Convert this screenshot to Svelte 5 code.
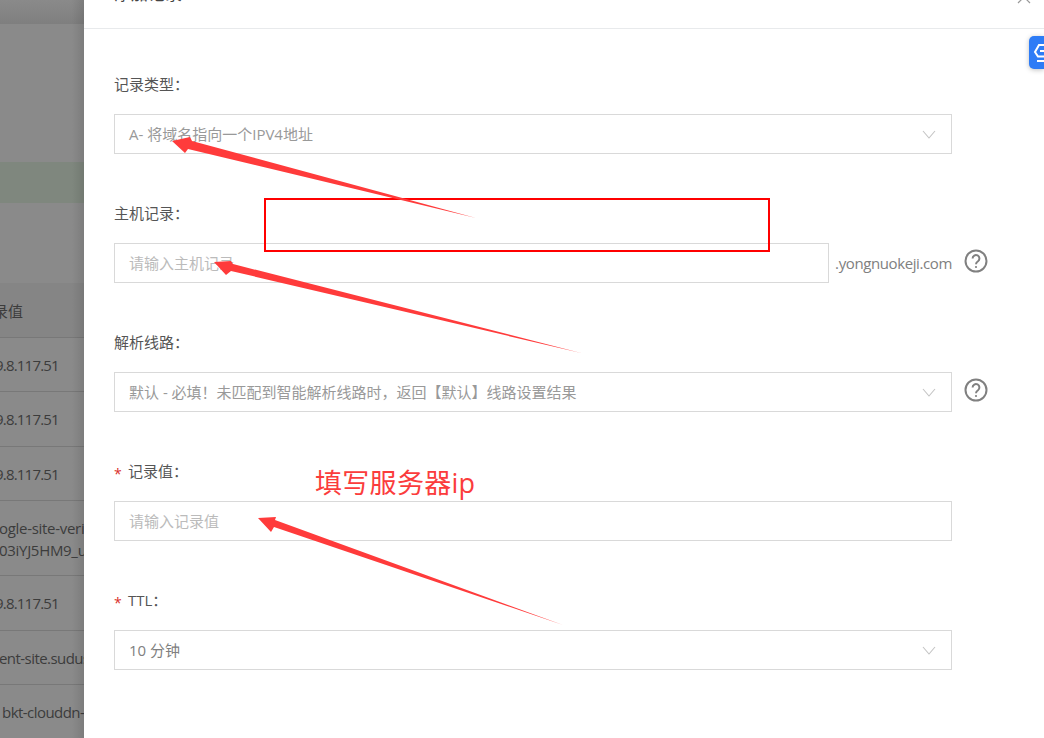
<script>
	const rows = [
		{ height: 54, lines: ['9.8.117.51'], offset: -5, spacing: -0.8 },
		{ height: 55, lines: ['9.8.117.51'], offset: -5, spacing: -0.8 },
		{ height: 54, lines: ['9.8.117.51'], offset: -5, spacing: -0.8 },
		{ height: 75, lines: ['ogle-site-verif', '03iYJ5HM9_u'], offset: -1, spacing: -0.3 },
		{ height: 55, lines: ['9.8.117.51'], offset: -5, spacing: -0.8 },
		{ height: 54, lines: ['ent-site.sudus'], offset: -1, spacing: -0.55 },
		{ height: 54, lines: ['bkt-clouddn-'], offset: 2, spacing: -0.55 }
	];

	const fields = [
		{ label: '记录类型：', value: 'A- 将域名指向一个IPV4地址', tone: 'muted', select: true },
		{ label: '主机记录：', value: '请输入主机记录', tone: 'hint', suffix: '.yongnuokeji.com', help: true },
		{
			label: '解析线路：',
			value: '默认 - 必填！未匹配到智能解析线路时，返回【默认】线路设置结果',
			tone: 'muted',
			select: true,
			help: true
		},
		{ label: '记录值：', value: '请输入记录值', tone: 'hint', required: true },
		{ label: 'TTL：', value: '10 分钟', tone: 'plain', select: true, required: true }
	];

	const arrows = [
		'172,141 190,137 192,141 476,218 188,149 185,153',
		'214,262 231,261 233,264 581,353 231,271 226,275',
		'258,518 276,517 275,520 563,625 274,527 271,532'
	];
</script>

<div class="page">
	<aside class="backdrop">
		<div class="strip"></div>
		<div class="band"></div>
		<div class="band green"></div>
		<div class="band low"></div>
		<div class="table">
			<div class="thead"><span>录值</span></div>
			{#each rows as row}
				<div class="row" style="height: {row.height}px; letter-spacing: {row.spacing}px">
					<div style="margin-left: {row.offset}px">
						{#each row.lines as line}
							<div>{line}</div>
						{/each}
					</div>
				</div>
			{/each}
		</div>
	</aside>

	<main class="drawer">
		<header class="head">
			<span class="title">添加记录</span>
			<svg class="close" width="14" height="14" viewBox="0 0 14 14">
				<path d="M1 1l12 12M13 1L1 13" />
			</svg>
		</header>

		<form class="form">
			{#each fields as field}
				<div class="item">
					<div class="label">
						{#if field.required}<span class="star">*</span>{/if}{field.label}
					</div>
					<div class="line">
						<div class="control">
							<div class="box {field.tone}">
								<span>{field.value}</span>
								{#if field.select}
									<svg class="chevron" width="14" height="9" viewBox="0 0 14 9">
										<path d="M1 1l6 7 6-7" />
									</svg>
								{/if}
							</div>
							{#if field.suffix}<span class="suffix">{field.suffix}</span>{/if}
						</div>
						{#if field.help}
							<svg class="help" width="24" height="24" viewBox="0 0 24 24">
								<circle cx="12" cy="12" r="10.500" />
								<path d="M8.600 9.400a3.400 3.400 0 1 1 5.400 2.800c-1.300.9-2 1.500-2 3" />
								<circle class="dot" cx="12" cy="18" r="1.100" />
							</svg>
						{/if}
					</div>
				</div>
			{/each}
		</form>
	</main>

	<div class="badge">
		<svg width="15" height="33" viewBox="0 0 15 33">
			<path d="M15 9H10L6 16 9 20.500H15M15 15H11M8 25H15" />
		</svg>
	</div>

	<div class="marks">
		<svg width="1044" height="738" viewBox="0 0 1044 738">
			<rect class="frame" x="265" y="199" width="504" height="52" />
			{#each arrows as points}
				<polygon class="arrow" {points} />
			{/each}
		</svg>
		<span class="note">填写服务器ip</span>
	</div>
</div>

<style>
	:global(body) {
		font-family: 'Open Sans', 'Noto Sans CJK SC', sans-serif;
		font-size: 15px;
	}

	.page {
		position: relative;
		display: flex;
		width: 1044px;
		height: 738px;
		overflow: hidden;
		background: #fff;
	}

	.backdrop {
		position: relative;
		flex: 0 0 84px;
		overflow: hidden;
		white-space: nowrap;
		background: #8a8a8a;
		color: #3c3c3c;
	}

	.backdrop::after {
		content: '';
		position: absolute;
		top: 0;
		right: 0;
		bottom: 0;
		width: 12px;
		background: linear-gradient(to right, rgba(0, 0, 0, 0), rgba(0, 0, 0, 0.1));
	}

	.strip {
		height: 24px;
		background: linear-gradient(#8a8a8a, #7f7f7f);
	}

	.band {
		height: 138px;
	}

	.band.green {
		height: 41px;
		background: #7f877e;
	}

	.band.low {
		height: 80px;
	}

	.thead {
		height: 54px;
		display: flex;
		align-items: center;
		background: #858585;
		box-sizing: border-box;
	}

	.thead span {
		margin-left: -7px;
	}

	.row {
		box-sizing: border-box;
		padding-top: 16px;
		border-top: 1px solid #787878;
		line-height: 22px;
	}

	.drawer {
		flex: 1;
		min-width: 0;
	}

	.head {
		position: relative;
		display: flex;
		align-items: flex-end;
		padding: 0 30px 24px;
		height: 4px;
		border-bottom: 1px solid #e8eaec;
	}

	.title {
		font-size: 17px;
		line-height: 20px;
		color: #444;
	}

	.close {
		position: absolute;
		right: 13px;
		top: -10px;
	}

	.close path {
		fill: none;
		stroke: #999;
		stroke-width: 1.2;
	}

	.form {
		display: flex;
		flex-direction: column;
		gap: 50px;
		padding: 46px 0 0 30px;
	}

	.item {
		display: flex;
		flex-direction: column;
		gap: 19px;
	}

	.label {
		height: 20px;
		line-height: 18px;
		color: #555;
	}

	.star {
		display: inline-block;
		width: 14px;
		font-size: 14px;
		color: #d9302a;
		transform: translateY(2px);
	}

	.line {
		display: flex;
		align-items: center;
		gap: 12px;
	}

	.control {
		display: flex;
		align-items: center;
		flex: 0 0 838px;
		gap: 6px;
	}

	.box {
		flex: 1;
		display: flex;
		align-items: center;
		justify-content: space-between;
		height: 40px;
		box-sizing: border-box;
		padding: 0 15px 2px 14px;
		border: 1px solid #d9d9d9;
	}

	.muted {
		color: #999;
	}

	.hint {
		color: #bbb;
	}

	.plain {
		color: #808080;
	}

	.suffix {
		color: #808080;
		letter-spacing: -0.39px;
	}

	.chevron {
		margin-top: 2px;
	}

	.chevron path {
		fill: none;
		stroke: #c4c4c4;
		stroke-width: 1.1;
	}

	.help {
		margin-bottom: 4px;
	}

	.help circle,
	.help path {
		fill: none;
		stroke: #808080;
		stroke-width: 2;
	}

	.help .dot {
		fill: #808080;
		stroke: none;
	}

	.badge {
		position: absolute;
		top: 36px;
		right: 0;
		width: 15px;
		height: 33px;
		background: #2e7cf6;
		border-radius: 5px 0 0 5px;
		box-shadow: 0 1px 5px rgba(0, 0, 0, 0.25);
	}

	.badge svg {
		display: block;
	}

	.badge path {
		fill: none;
		stroke: #fff;
		stroke-width: 2;
	}

	.marks {
		position: absolute;
		inset: 0;
		pointer-events: none;
	}

	.frame {
		fill: none;
		stroke: #f00;
		stroke-width: 2;
	}

	.arrow {
		fill: #ff3b3b;
	}

	.note {
		position: absolute;
		left: 315px;
		top: 464px;
		font-size: 27px;
		line-height: 38px;
		letter-spacing: 0.3px;
		color: #fb3c3c;
		white-space: nowrap;
	}
</style>
